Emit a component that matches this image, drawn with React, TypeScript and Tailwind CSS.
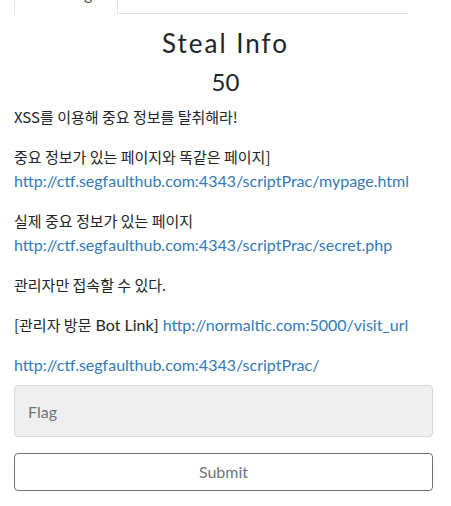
import React, { useState } from 'react';

const links = {
  mypage: 'http://ctf.segfaulthub.com:4343/scriptPrac/mypage.html',
  secret: 'http://ctf.segfaulthub.com:4343/scriptPrac/secret.php',
  bot: 'http://normaltic.com:5000/visit_url',
  base: 'http://ctf.segfaulthub.com:4343/scriptPrac/',
};

// Korean text renders a touch narrower in the original
const Ko: React.FC<{ children: React.ReactNode }> = ({ children }) => (
  <span className="text-[15px] font-['Noto_Sans_CJK_KR',sans-serif]">{children}</span>
);

const ChallengeModal: React.FC = () => {
  const [flag, setFlag] = useState('');

  return (
    <div className="w-[451px] h-[506px] overflow-hidden bg-white text-[#212529] font-['Lato',sans-serif]">
      {/* tabs */}
      <div className="mx-[14px] w-[394px] flex border-b border-[#dee2e6] -mt-[26px]">
        <div className="w-[104px] h-[40px] mb-[-1px] bg-white border border-[#dee2e6] border-b-white rounded-t flex items-center justify-center text-[16px] text-[#495057]">
          Challenge
        </div>
      </div>

      <div className="px-[14px]">
        <h3 className="mt-[12px] text-center text-[26px] leading-[34px] tracking-[2px] text-[#212529]">
          Steal Info
        </h3>
        <h4 className="mt-[7px] text-center text-[24px] leading-[29px] mb-[9px]">50</h4>

        <div className="text-[16px] leading-[24px]">
          <p className="mb-4"><Ko>XSS를 이용해 중요 정보를 탈취해라!</Ko></p>
          <p className="mb-4">
            <Ko>중요 정보가 있는 페이지와 똑같은 페이지]</Ko>
            <br />
            <a href="#" className="text-[#337ab7]">{links.mypage}</a>
          </p>
          <p className="mb-4">
            <Ko>실제 중요 정보가 있는 페이지</Ko>
            <br />
            <a href="#" className="text-[#337ab7]">{links.secret}</a>
          </p>
          <p className="mb-4"><Ko>관리자만 접속할 수 있다.</Ko></p>
          <p className="mb-4">
            <Ko>[관리자 방문</Ko> Bot Link] <a href="#" className="text-[#337ab7]">{links.bot}</a>
          </p>
          <p className="mb-2">
            <a href="#" className="text-[#337ab7]">{links.base}</a>
          </p>
        </div>

        <div className="flex flex-col gap-[16px] w-[419px]">
          <input
            value={flag}
            onChange={(e) => setFlag(e.target.value)}
            placeholder="Flag"
            className="h-[52px] px-[13px] bg-[#efefef] border border-[#d5d8dc] rounded text-[16px] text-[#495057] placeholder:text-[#6c757d] outline-none"
          />
          <button className="h-[38px] border border-[#6c757d] rounded text-[16px] text-[#6c757d] bg-white">
            Submit
          </button>
        </div>
      </div>
    </div>
  );
};

export default function App() {
  return <ChallengeModal />;
}
